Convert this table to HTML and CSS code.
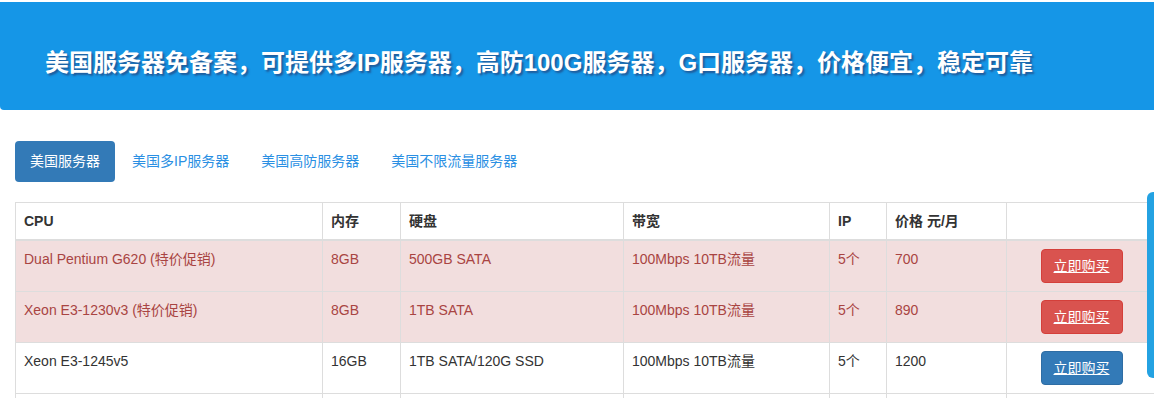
FILE: index.html
```html
<!DOCTYPE html>
<html lang="zh-CN">
<head>
<meta charset="utf-8">
<title>美国服务器</title>
<link rel="stylesheet" href="styles.css">
</head>
<body>
<header class="banner">
  <h1 class="banner-title">美国服务器免备案，可提供多IP服务器，高防100G服务器，G口服务器，价格便宜，稳定可靠</h1>
</header>
<main class="content">
  <ul class="pills">
    <li class="pill active"><a href="#">美国服务器</a></li>
    <li class="pill"><a href="#">美国多IP服务器</a></li>
    <li class="pill"><a href="#">美国高防服务器</a></li>
    <li class="pill"><a href="#">美国不限流量服务器</a></li>
  </ul>
  <table class="servers">
    <colgroup>
      <col class="c-cpu"><col class="c-mem"><col class="c-disk"><col class="c-bw"><col class="c-ip"><col class="c-price"><col class="c-buy">
    </colgroup>
    <thead>
      <tr><th>CPU</th><th>内存</th><th>硬盘</th><th>带宽</th><th>IP</th><th>价格 元/月</th><th></th></tr>
    </thead>
    <tbody>
      <tr class="danger">
        <td>Dual Pentium G620 (特价促销)</td><td>8GB</td><td>500GB SATA</td><td>100Mbps 10TB流量</td><td>5个</td><td>700</td>
        <td class="buy"><a class="btn btn-danger" href="#">立即购买</a></td>
      </tr>
      <tr class="danger">
        <td>Xeon E3-1230v3 (特价促销)</td><td>8GB</td><td>1TB SATA</td><td>100Mbps 10TB流量</td><td>5个</td><td>890</td>
        <td class="buy"><a class="btn btn-danger" href="#">立即购买</a></td>
      </tr>
      <tr>
        <td>Xeon E3-1245v5</td><td>16GB</td><td>1TB SATA/120G SSD</td><td>100Mbps 10TB流量</td><td>5个</td><td>1200</td>
        <td class="buy"><a class="btn btn-primary" href="#">立即购买</a></td>
      </tr>
      <tr class="empty-row">
        <td></td><td></td><td></td><td></td><td></td><td></td><td></td>
      </tr>
    </tbody>
  </table>
</main>
<div class="side-tab"></div>
</body>
</html>
```
FILE: styles.css
```css
html, body {
  margin: 0;
  padding: 0;
  overflow: hidden;
}
body {
  font-family: "Liberation Sans", Arial, "Noto Sans CJK SC", sans-serif;
  font-size: 14px;
  line-height: 20px;
  color: #333;
  background: #fff;
}
.banner {
  margin-top: 2px;
  height: 108px;
  background: #1596e7;
  border-bottom-left-radius: 4px;
  box-sizing: border-box;
  padding: 47px 0 0 45px;
}
.banner-title {
  margin: 0;
  font-size: 24px;
  line-height: 28px;
  font-weight: bold;
  color: #fff;
  text-shadow: 2px 2px 2px rgba(40, 40, 90, 0.55);
  white-space: nowrap;
}
.content {
  padding: 31px 0 0 15px;
}
.pills {
  list-style: none;
  margin: 0;
  padding: 0;
  display: flex;
  gap: 2px;
}
.pill a {
  display: block;
  padding: 10px 15px 11px;
  line-height: 20px;
  border-radius: 4px;
  color: #2a8fe3;
  text-decoration: none;
}
.pill.active a {
  background: #337ab7;
  color: #fff;
}
.servers {
  margin-top: 20px;
  border-collapse: collapse;
  table-layout: fixed;
  width: 1141px;
  border: 1px solid #ddd;
}
.c-cpu { width: 307px; }
.c-mem { width: 78px; }
.c-disk { width: 223px; }
.c-bw { width: 206px; }
.c-ip { width: 57px; }
.c-price { width: 120px; }
.c-buy { width: 150px; }
.servers th,
.servers td {
  border: 1px solid #ddd;
  padding: 8px 8px;
  text-align: left;
  vertical-align: top;
  line-height: 20px;
  white-space: nowrap;
}
.servers th {
  font-weight: bold;
  border-bottom-width: 2px;
}
.servers tr.danger td {
  background: #f2dede;
  color: #a94442;
}
.servers tr.empty-row td {
  height: 34px;
}
.servers td.buy {
  text-align: center;
}
.btn {
  display: inline-block;
  padding: 6px 12px;
  line-height: 20px;
  border: 1px solid transparent;
  border-radius: 4px;
  color: #fff;
  text-decoration: underline;
}
.btn-danger {
  background: #d9534f;
  border-color: #d43f3a;
}
.btn-primary {
  background: #337ab7;
  border-color: #2e6da4;
}
.side-tab {
  position: fixed;
  top: 192px;
  left: 1147px;
  width: 14px;
  height: 186px;
  background: #24a2e2;
  border-radius: 6px;
}
```
